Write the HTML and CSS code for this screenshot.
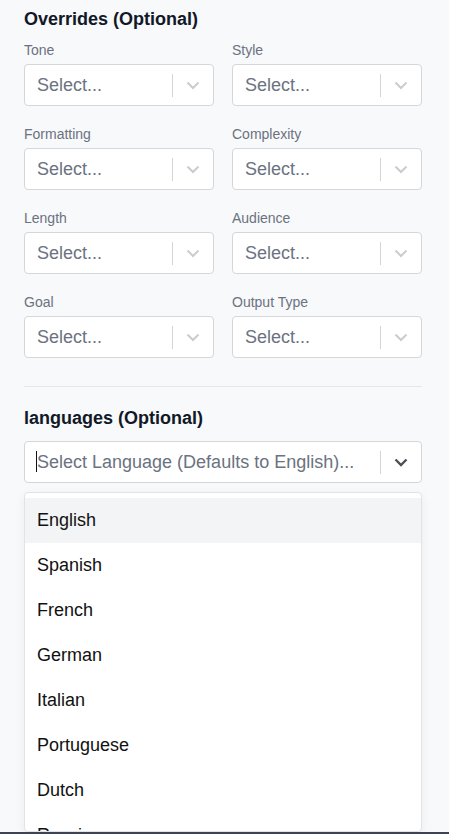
FILE: index.html
```html
<!DOCTYPE html>
<html lang="en">
<head>
    <meta charset="UTF-8">
    <meta name="viewport" content="width=device-width, initial-scale=1.0">
    <title>Overrides</title>
    <link rel="stylesheet" href="styles.css">
</head>
<body>
    <div class="panel">
        <h3 class="section-title">Overrides (Optional)</h3>
        <div class="overrides-grid">
            <div class="field">
                <label>Tone</label>
                <div class="select">
                    <span class="select-value">Select...</span>
                    <span class="select-sep"></span>
                    <span class="select-arrow"><svg width="14" height="14" viewBox="0 0 14 14"><polyline points="1.5,4.5 7,10 12.5,4.5"/></svg></span>
                </div>
            </div>
            <div class="field">
                <label>Style</label>
                <div class="select">
                    <span class="select-value">Select...</span>
                    <span class="select-sep"></span>
                    <span class="select-arrow"><svg width="14" height="14" viewBox="0 0 14 14"><polyline points="1.5,4.5 7,10 12.5,4.5"/></svg></span>
                </div>
            </div>
            <div class="field">
                <label>Formatting</label>
                <div class="select">
                    <span class="select-value">Select...</span>
                    <span class="select-sep"></span>
                    <span class="select-arrow"><svg width="14" height="14" viewBox="0 0 14 14"><polyline points="1.5,4.5 7,10 12.5,4.5"/></svg></span>
                </div>
            </div>
            <div class="field">
                <label>Complexity</label>
                <div class="select">
                    <span class="select-value">Select...</span>
                    <span class="select-sep"></span>
                    <span class="select-arrow"><svg width="14" height="14" viewBox="0 0 14 14"><polyline points="1.5,4.5 7,10 12.5,4.5"/></svg></span>
                </div>
            </div>
            <div class="field">
                <label>Length</label>
                <div class="select">
                    <span class="select-value">Select...</span>
                    <span class="select-sep"></span>
                    <span class="select-arrow"><svg width="14" height="14" viewBox="0 0 14 14"><polyline points="1.5,4.5 7,10 12.5,4.5"/></svg></span>
                </div>
            </div>
            <div class="field">
                <label>Audience</label>
                <div class="select">
                    <span class="select-value">Select...</span>
                    <span class="select-sep"></span>
                    <span class="select-arrow"><svg width="14" height="14" viewBox="0 0 14 14"><polyline points="1.5,4.5 7,10 12.5,4.5"/></svg></span>
                </div>
            </div>
            <div class="field">
                <label>Goal</label>
                <div class="select">
                    <span class="select-value">Select...</span>
                    <span class="select-sep"></span>
                    <span class="select-arrow"><svg width="14" height="14" viewBox="0 0 14 14"><polyline points="1.5,4.5 7,10 12.5,4.5"/></svg></span>
                </div>
            </div>
            <div class="field">
                <label>Output Type</label>
                <div class="select">
                    <span class="select-value">Select...</span>
                    <span class="select-sep"></span>
                    <span class="select-arrow"><svg width="14" height="14" viewBox="0 0 14 14"><polyline points="1.5,4.5 7,10 12.5,4.5"/></svg></span>
                </div>
            </div>
        </div>

        <hr class="divider">

        <h3 class="section-title languages-title">languages (Optional)</h3>
        <div class="select select-open">
            <span class="select-value"><span class="caret"></span>Select Language (Defaults to English)...</span>
            <span class="select-sep"></span>
            <span class="select-arrow"><svg width="14" height="14" viewBox="0 0 14 14"><polyline points="1.5,4.5 7,10 12.5,4.5"/></svg></span>
        </div>
        <div class="menu">
            <div class="menu-item active">English</div>
            <div class="menu-item">Spanish</div>
            <div class="menu-item">French</div>
            <div class="menu-item">German</div>
            <div class="menu-item">Italian</div>
            <div class="menu-item">Portuguese</div>
            <div class="menu-item">Dutch</div>
            <div class="menu-item">Russian</div>
            <div class="menu-item">Chinese</div>
        </div>
    </div>
    <div class="bottom-bar"></div>
</body>
</html>
```

FILE: styles.css
```css
body {
    margin: 0;
    font-family: "Liberation Sans", Arial, sans-serif;
    background-color: #f8f9fb;
    color: #111827;
}
.panel {
    padding: 5px 27px 0 24px;
}
.section-title {
    margin: 0 0 7px;
    font-size: 18px;
    line-height: 28px;
    font-weight: bold;
    color: #111827;
}
.languages-title {
    margin-bottom: 9px;
}
.overrides-grid {
    display: grid;
    grid-template-columns: 1fr 1fr;
    column-gap: 18px;
    row-gap: 18px;
}
.field label {
    display: block;
    font-size: 14px;
    line-height: 20px;
    color: #6b7280;
    margin-bottom: 4px;
}
.select {
    display: flex;
    align-items: center;
    height: 42px;
    box-sizing: border-box;
    background: #fff;
    border: 1px solid #d4d6da;
    border-radius: 4px;
}
.select-value {
    flex: 1;
    padding-left: 12px;
    font-size: 18px;
    color: #6b7280;
    white-space: nowrap;
    overflow: hidden;
}
.select-sep {
    width: 1px;
    height: 23px;
    background: #d4d4d4;
}
.select-arrow {
    width: 40px;
    display: flex;
    justify-content: center;
    align-items: center;
}
.select-arrow svg polyline {
    fill: none;
    stroke: #cccccc;
    stroke-width: 2;
}
.divider {
    border: none;
    border-top: 1px solid #e5e7eb;
    margin: 28px 0 17px;
}
.select-open .select-value {
    padding-left: 11px;
}
.select-open .select-arrow svg polyline {
    stroke: #4b5057;
    stroke-width: 2.4;
}
.caret {
    display: inline-block;
    width: 1px;
    height: 21px;
    background: #111;
    vertical-align: -4px;
}
.menu {
    margin-top: 9px;
    max-height: 340px;
    overflow: hidden;
    box-sizing: border-box;
    padding-top: 5px;
    background: #fff;
    border: 1px solid #e1e3e7;
    border-radius: 4px;
    box-shadow: 0 4px 11px rgba(0, 0, 0, 0.06);
}
.menu-item {
    padding: 12px;
    font-size: 18px;
    color: #111;
}
.menu-item.active {
    background: #f3f4f6;
}
.bottom-bar {
    position: fixed;
    left: 0;
    right: 0;
    bottom: 0;
    height: 2px;
    background: #3d4451;
}
```
